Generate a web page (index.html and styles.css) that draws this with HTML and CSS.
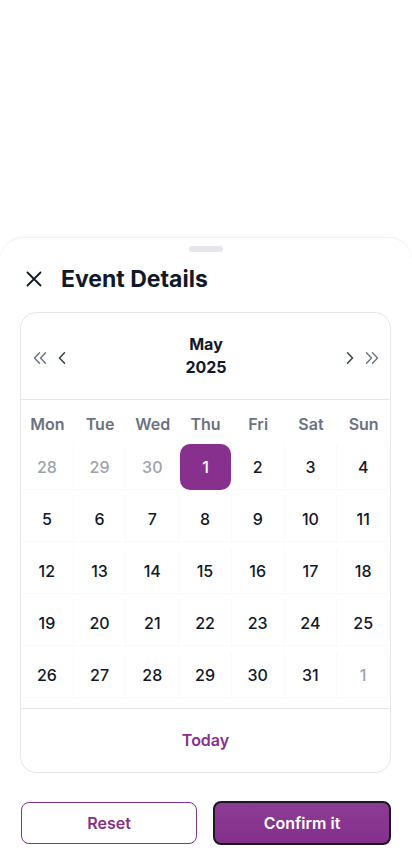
FILE: index.html
```html
<!DOCTYPE html>
<html lang="en">
<head>
<meta charset="utf-8">
<title>Date picker</title>
<link rel="stylesheet" href="styles.css">
</head>
<body>
<div class="sheet">
  <div class="handle"></div>
  <div class="sheet-header">
    <button class="close" aria-label="Close">
      <svg width="16" height="16" viewBox="0 0 16 16"><path d="M1.5 1.5 L14.5 14.5 M14.5 1.5 L1.5 14.5" stroke="#111827" stroke-width="1.8" stroke-linecap="round" fill="none"/></svg>
    </button>
    <h1 class="title">Event Details</h1>
  </div>

  <div class="card">
    <div class="cal-head">
      <div class="nav">
        <svg class="dbl" width="14" height="12" viewBox="0 0 14 12"><path d="M6.5 0.8 L1.5 6 L6.5 11.2 M12.5 0.8 L7.5 6 L12.5 11.2" stroke="#6b7280" stroke-width="1.4" fill="none" stroke-linecap="round" stroke-linejoin="round"/></svg>
        <svg class="sgl" width="8" height="12" viewBox="0 0 8 12"><path d="M6.5 0.8 L1.5 6 L6.5 11.2" stroke="#374151" stroke-width="1.5" fill="none" stroke-linecap="round" stroke-linejoin="round"/></svg>
      </div>
      <div class="month">
        <span>May</span>
        <span>2025</span>
      </div>
      <div class="nav">
        <svg class="sgl" width="8" height="12" viewBox="0 0 8 12"><path d="M1.5 0.8 L6.5 6 L1.5 11.2" stroke="#374151" stroke-width="1.5" fill="none" stroke-linecap="round" stroke-linejoin="round"/></svg>
        <svg class="dbl" width="14" height="12" viewBox="0 0 14 12"><path d="M1.5 0.8 L6.5 6 L1.5 11.2 M7.5 0.8 L12.5 6 L7.5 11.2" stroke="#6b7280" stroke-width="1.4" fill="none" stroke-linecap="round" stroke-linejoin="round"/></svg>
      </div>
    </div>

    <div class="cal-body">
      <div class="weekdays">
        <span>Mon</span><span>Tue</span><span>Wed</span><span>Thu</span><span>Fri</span><span>Sat</span><span>Sun</span>
      </div>
      <div class="days">
        <span class="day muted">28</span><span class="day muted">29</span><span class="day muted">30</span><span class="day selected">1</span><span class="day">2</span><span class="day">3</span><span class="day">4</span>
        <span class="day">5</span><span class="day">6</span><span class="day">7</span><span class="day">8</span><span class="day">9</span><span class="day">10</span><span class="day">11</span>
        <span class="day">12</span><span class="day">13</span><span class="day">14</span><span class="day">15</span><span class="day">16</span><span class="day">17</span><span class="day">18</span>
        <span class="day">19</span><span class="day">20</span><span class="day">21</span><span class="day">22</span><span class="day">23</span><span class="day">24</span><span class="day">25</span>
        <span class="day">26</span><span class="day">27</span><span class="day">28</span><span class="day">29</span><span class="day">30</span><span class="day">31</span><span class="day muted">1</span>
      </div>
    </div>

    <div class="cal-foot">
      <span class="today">Today</span>
    </div>
  </div>

  <div class="actions">
    <button class="btn btn-outline">Reset</button>
    <button class="btn btn-primary">Confirm it</button>
  </div>
</div>
</body>
</html>
```

FILE: styles.css
```css
* { box-sizing: border-box; }

html, body {
  margin: 0;
  padding: 0;
  background: #ffffff;
}

body {
  font-family: "Inter", "Noto Sans", "Liberation Sans", sans-serif;
  color: #111827;
  width: 412px;
  height: 868px;
  overflow: hidden;
}

.sheet {
  margin-top: 237px;
  padding: 8px 21px 0 20px;
  border-radius: 24px 24px 0 0;
  border-top: 1px solid #f1f2f4;
  box-shadow: 0 -1px 3px rgba(0, 0, 0, 0.03);
  background: #fff;
}

.handle {
  width: 34px;
  height: 6px;
  border-radius: 3px;
  background: #e5e7eb;
  margin: 0 auto;
}

.sheet-header {
  display: flex;
  align-items: center;
  margin-top: 15px;
  height: 24px;
}

.close {
  border: 0;
  background: none;
  padding: 0;
  margin-left: 6px;
  width: 16px;
  height: 16px;
  display: flex;
}

.title {
  margin: 0 0 0 19px;
  font-size: 23px;
  line-height: 24px;
  font-weight: 700;
  color: #111827;
}

.card {
  margin-top: 21px;
  border: 1px solid #e5e7eb;
  border-radius: 16px;
  overflow: hidden;
}

.cal-head {
  height: 87px;
  border-bottom: 1px solid #e5e7eb;
  display: flex;
  align-items: center;
  justify-content: space-between;
  padding: 4px 11px 0 12px;
}

.nav {
  display: flex;
  align-items: center;
  gap: 11px;
}

.nav svg { display: block; }

.month {
  display: flex;
  flex-direction: column;
  align-items: center;
  font-size: 16px;
  line-height: 23px;
  font-weight: 700;
  color: #111827;
  margin-top: -4px;
}

.cal-body {
  padding: 8px 0 10px;
}

.weekdays {
  display: grid;
  grid-template-columns: repeat(7, 1fr);
  height: 32px;
  margin-bottom: 4px;
  align-items: center;
  text-align: center;
  font-size: 16px;
  font-weight: 600;
  color: #6b7280;
}

.days {
  display: grid;
  grid-template-columns: repeat(7, 1fr);
  row-gap: 6px;
}

.day {
  height: 46px;
  display: flex;
  align-items: center;
  justify-content: center;
  font-size: 16px;
  font-weight: 500;
  color: #111827;
  border-right: 1px solid #fafafb;
  border-bottom: 1px solid #fafafb;
}

.day.muted { color: #9ca3af; }

.day.selected {
  background: #87308e;
  color: #ffffff;
  border-radius: 10px;
  border: 0;
  margin: 0 1px;
}

.cal-foot {
  border-top: 1px solid #e5e7eb;
  height: 64px;
  display: flex;
  align-items: center;
  justify-content: center;
  padding-bottom: 2px;
}

.today {
  font-size: 16px;
  font-weight: 600;
  color: #87308e;
}

.actions {
  display: flex;
  align-items: center;
  gap: 16px;
  margin-top: 28px;
}

.btn {
  flex: 1;
  font-family: inherit;
  font-size: 16px;
  line-height: 23px;
  font-weight: 600;
  border-radius: 8px;
  padding: 0 14px;
  margin: 0;
}

.btn-outline {
  height: 42px;
  margin-left: 1px;
  background: #fff;
  color: #87308e;
  border: 1px solid #87308e;
}

.btn-primary {
  height: 44px;
  background: linear-gradient(#8d3c95, #83308c);
  color: #fff;
  border: 2px solid #1d1820;
  overflow: hidden;
}
```
